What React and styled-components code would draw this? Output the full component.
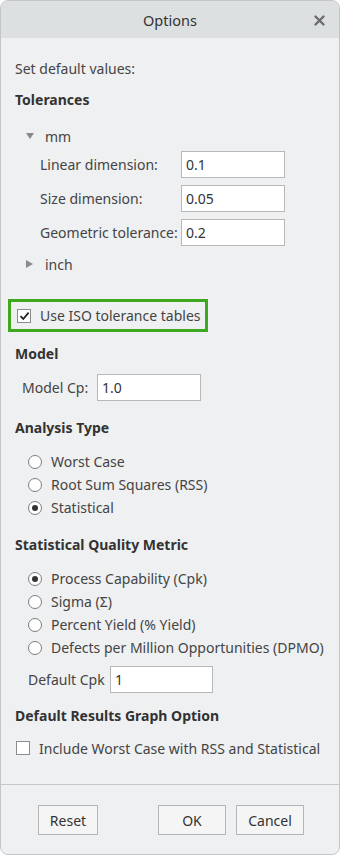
import React from "react";
import styled, { createGlobalStyle } from "styled-components";

const Global = createGlobalStyle`
  html, body { margin: 0; padding: 0; background: #ffffff; }
  body { font-family: "Noto Sans", "Open Sans", sans-serif; }
  * { box-sizing: border-box; }
`;

const Dialog = styled.div`
  width: 340px;
  height: 855px;
  border: 1px solid #c3c5c7;
  border-radius: 8px;
  background: #eff0f1;
  overflow: hidden;
  display: flex;
  flex-direction: column;
  color: #444;
  font-size: 14px;
`;

const TitleBar = styled.div`
  height: 37px;
  flex: none;
  background: #dde0e1;
  display: flex;
  align-items: center;
  justify-content: center;
  position: relative;
  font-size: 14.5px;
  color: #333;
`;

const Close = styled.svg`
  position: absolute;
  right: 14px;
  top: 14px;
`;

const Body = styled.div`
  flex: 1;
  display: flex;
  flex-direction: column;
  padding-left: 14px;
`;

const Line = styled.div`
  height: 20px;
  display: flex;
  align-items: center;
  margin-top: ${(p) => p.mt || 0}px;
  padding-left: ${(p) => p.indent || 0}px;
  white-space: nowrap;
`;

const Heading = styled(Line)`
  font-weight: 700;
  color: #333;
`;

const Tri = styled.span`
  width: 0;
  height: 0;
  margin-left: 11px;
  ${(p) =>
    p.open
      ? `border-left: 4px solid transparent; border-right: 4px solid transparent; border-top: 6px solid #8a8a8a; margin-right: 11px;`
      : `border-top: 4.5px solid transparent; border-bottom: 4.5px solid transparent; border-left: 7px solid #8a8a8a; margin-right: 12px;`}
`;

const FieldRow = styled.div`
  height: 27px;
  display: flex;
  align-items: center;
  margin-top: ${(p) => p.mt || 0}px;
  padding-left: ${(p) => p.indent || 0}px;
`;

const Label = styled.span`
  width: ${(p) => (p.w ? p.w + "px" : "auto")};
  flex: none;
  white-space: nowrap;
`;

const Input = styled.div`
  width: ${(p) => p.w || 104}px;
  height: 27px;
  background: #fff;
  border: 1px solid #b8b8b8;
  display: flex;
  align-items: center;
  padding-left: 4px;
  color: #333;
`;

const IsoBox = styled.div`
  margin-top: 25px;
  margin-left: -7px;
  width: 200px;
  height: 33px;
  border: 3px solid #3ea91f;
  display: flex;
  align-items: center;
  padding-left: 6px;
  white-space: nowrap;
`;

const Box = styled.span`
  width: 14px;
  height: 14px;
  flex: none;
  border: 1px solid #8c8c8c;
  background: #fff;
  margin-right: 9px;
  display: flex;
  align-items: center;
  justify-content: center;
`;

const RadioRow = styled.div`
  height: 23px;
  display: flex;
  align-items: center;
  padding-left: ${(p) => p.indent || 13}px;
  white-space: nowrap;
`;

const Radio = styled.span`
  width: 14px;
  height: 14px;
  flex: none;
  border-radius: 50%;
  border: 1px solid #7d7d7d;
  background: #fff;
  margin-right: 9px;
  display: flex;
  align-items: center;
  justify-content: center;
  &::after {
    content: "";
    width: 6px;
    height: 6px;
    border-radius: 50%;
    background: #333;
    display: ${(p) => (p.on ? "block" : "none")};
  }
`;

const Group = styled.div`
  margin-top: ${(p) => p.mt || 0}px;
  display: flex;
  flex-direction: column;
`;

const Separator = styled.div`
  margin-top: auto;
  height: 1px;
  background: #c6c7c8;
  flex: none;
`;

const Footer = styled.div`
  height: 69px;
  flex: none;
  display: flex;
  align-items: flex-start;
  padding: 20px 0 0 37px;
`;

const Button = styled.div`
  width: ${(p) => p.w}px;
  height: 30px;
  margin-left: ${(p) => p.ml || 0}px;
  border: 1px solid #b5b5b5;
  background: #f5f5f5;
  display: flex;
  align-items: center;
  justify-content: center;
  color: #333;
  font-size: 14px;
`;

const Check = () => (
  <svg width="11" height="10" viewBox="0 0 11 10">
    <path d="M1.5 5.2 L4.3 8 L9.6 1.6" fill="none" stroke="#222" strokeWidth="1.8" />
  </svg>
);

export default function App() {
  return (
    <>
      <Global />
      <Dialog>
        <TitleBar>
          Options
          <Close width="11" height="11" viewBox="0 0 11 11">
            <path d="M1.5 1.5 L9.5 9.5 M9.5 1.5 L1.5 9.5" stroke="#6b6b6b" strokeWidth="2.4" strokeLinecap="round" />
          </Close>
        </TitleBar>
        <Body>
          <Line mt={20}>Set default values:</Line>
          <Heading mt={11}>Tolerances</Heading>
          <Line mt={17}>
            <Tri open />mm
          </Line>
          <FieldRow mt={5} indent={25}>
            <Label w={141}>Linear dimension:</Label>
            <Input>0.1</Input>
          </FieldRow>
          <FieldRow mt={7} indent={25}>
            <Label w={141}>Size dimension:</Label>
            <Input>0.05</Input>
          </FieldRow>
          <FieldRow mt={7} indent={25}>
            <Label w={141}>Geometric tolerance:</Label>
            <Input>0.2</Input>
          </FieldRow>
          <Line mt={8}>
            <Tri />inch
          </Line>
          <IsoBox>
            <Box><Check /></Box>
            Use ISO tolerance tables
          </IsoBox>
          <Heading mt={11}>Model</Heading>
          <FieldRow mt={11} indent={7}>
            <Label w={75}>Model Cp:</Label>
            <Input>1.0</Input>
          </FieldRow>
          <Heading mt={16}>Analysis Type</Heading>
          <Group mt={13}>
            <RadioRow><Radio />Worst Case</RadioRow>
            <RadioRow><Radio />Root Sum Squares (RSS)</RadioRow>
            <RadioRow><Radio on />Statistical</RadioRow>
          </Group>
          <Heading mt={15}>Statistical Quality Metric</Heading>
          <Group mt={13}>
            <RadioRow><Radio on />Process Capability (Cpk)</RadioRow>
            <RadioRow><Radio />Sigma (Σ)</RadioRow>
            <RadioRow><Radio />Percent Yield (% Yield)</RadioRow>
            <RadioRow><Radio />Defects per Million Opportunities (DPMO)</RadioRow>
          </Group>
          <FieldRow mt={7} indent={13}>
            <Label w={82}>Default Cpk</Label>
            <Input w={103}>1</Input>
          </FieldRow>
          <Heading mt={12}>Default Results Graph Option</Heading>
          <Line mt={13} indent={1}>
            <Box />
            Include Worst Case with RSS and Statistical
          </Line>
        </Body>
        <Separator />
        <Footer>
          <Button w={60}>Reset</Button>
          <Button w={68} ml={60}>OK</Button>
          <Button w={68} ml={10}>Cancel</Button>
        </Footer>
      </Dialog>
    </>
  );
}
